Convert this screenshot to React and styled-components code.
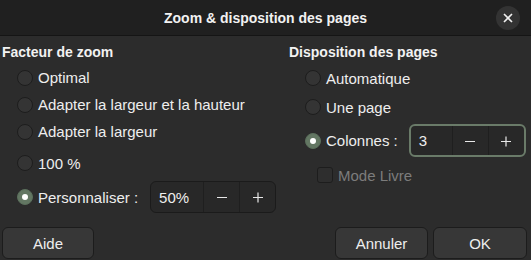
import React from "react"
import styled, { createGlobalStyle } from "styled-components"

const Global = createGlobalStyle`
    html, body {
        margin: 0;
        padding: 0;
        background: #2c2c2c;
    }
    body {
        font-family: "Liberation Sans", Arial, sans-serif;
        color: #eeeeee;
    }
`

const Dialog = styled.div`
    width: 531px;
    height: 260px;
    display: flex;
    flex-direction: column;
    background: #2c2c2c;
    overflow: hidden;
`

const TitleBar = styled.div`
    height: 35px;
    display: grid;
    grid-template-columns: 1fr auto 1fr;
    align-items: center;
    background: #202020;
    border-bottom: 1px solid #151515;
    flex-shrink: 0;
`

const Title = styled.div`
    grid-column: 2;
    font-weight: bold;
    font-size: 14px;
    color: #f2f2f2;
`

const CloseBtn = styled.div`
    grid-column: 3;
    justify-self: end;
    margin-right: 11px;
    width: 24px;
    height: 24px;
    border-radius: 50%;
    background: #333333;
    display: flex;
    align-items: center;
    justify-content: center;
`

const Columns = styled.div`
    display: grid;
    grid-template-columns: 287px 1fr;
    padding: 4px 0 0 2px;
`

const Column = styled.div`
    display: flex;
    flex-direction: column;
`

const Heading = styled.div`
    height: 24px;
    display: flex;
    align-items: center;
    font-weight: bold;
    font-size: 14px;
    color: #f2f2f2;
`

const Row = styled.div`
    height: ${(p) => p.h}px;
    margin-top: ${(p) => p.mt || 0}px;
    display: flex;
    align-items: center;
    padding-left: ${(p) => p.indent}px;
    font-size: 15px;
`

const Radio = styled.span`
    width: 16px;
    height: 16px;
    box-sizing: border-box;
    border-radius: 50%;
    border: 1px solid ${(p) => (p.checked ? "#5b6f5c" : "#1d1d1d")};
    background: ${(p) => (p.checked ? "#637763" : "#343434")};
    display: flex;
    align-items: center;
    justify-content: center;
    margin-right: 5px;
    flex-shrink: 0;

    &::after {
        content: "";
        display: ${(p) => (p.checked ? "block" : "none")};
        width: 6px;
        height: 6px;
        border-radius: 50%;
        background: #ffffff;
    }
`

const Check = styled.span`
    width: 16px;
    height: 16px;
    box-sizing: border-box;
    border-radius: 3px;
    border: 1px solid #1d1d1d;
    background: #2e2e2e;
    margin-right: 5px;
`

const Label = styled.span`
    color: ${(p) => (p.dim ? "#7c7c7c" : "#eeeeee")};
    white-space: nowrap;
`

const Spin = styled.div`
    margin-left: ${(p) => p.ml}px;
    width: ${(p) => p.w}px;
    height: ${(p) => p.h}px;
    box-sizing: border-box;
    display: flex;
    border-radius: 6px;
    border: ${(p) => (p.focus ? "2px solid #6a7b69" : "1px solid #1b1b1b")};
    background: #282828;
    overflow: hidden;
`

const SpinValue = styled.div`
    flex: 1;
    display: flex;
    align-items: center;
    padding-left: 8px;
    font-size: 15px;
`

const SpinBtn = styled.div`
    width: 35px;
    border-left: 1px solid #1f1f1f;
    display: flex;
    align-items: center;
    justify-content: center;
`

const Footer = styled.div`
    margin-top: auto;
    display: flex;
    gap: 5px;
    padding: 0 4px 1px 2px;
`

const Spacer = styled.div`
    flex: 1;
`

const Button = styled.div`
    width: ${(p) => p.w}px;
    height: 32px;
    box-sizing: border-box;
    border-radius: 6px;
    border: 1px solid #1c1c1c;
    background: #373737;
    display: flex;
    align-items: center;
    justify-content: center;
    font-size: 15px;
    color: #eeeeee;
`

const Minus = () => (
    <svg width="12" height="12" viewBox="0 0 12 12"><path d="M1 6.5h10" stroke="#e8e8e8" strokeWidth="1.2" /></svg>
)
const Plus = () => (
    <svg width="12" height="12" viewBox="0 0 12 12"><path d="M1 6.5h10M6 1.5v10" stroke="#e8e8e8" strokeWidth="1.2" /></svg>
)

const SpinBox = ({ value, w, h, ml, focus }) => (
    <Spin w={w} h={h} ml={ml} focus={focus}>
        <SpinValue>{value}</SpinValue>
        <SpinBtn><Minus /></SpinBtn>
        <SpinBtn><Plus /></SpinBtn>
    </Spin>
)

const App = () => {
    return (
        <Dialog>
            <Global />
            <TitleBar>
                <Title>Zoom &amp; disposition des pages</Title>
                <CloseBtn>
                    <svg width="10" height="10" viewBox="0 0 10 10"><path d="M1 1l8 8M9 1l-8 8" stroke="#f0f0f0" strokeWidth="1.6" /></svg>
                </CloseBtn>
            </TitleBar>
            <Columns>
                <Column>
                    <Heading>Facteur de zoom</Heading>
                    <Row h={27} indent={15}><Radio /><Label>Optimal</Label></Row>
                    <Row h={27} indent={15}><Radio /><Label>Adapter la largeur et la hauteur</Label></Row>
                    <Row h={27} indent={15}><Radio /><Label>Adapter la largeur</Label></Row>
                    <Row h={36} indent={15}><Radio /><Label>100 %</Label></Row>
                    <Row h={32} indent={15}>
                        <Radio checked /><Label>Personnaliser :</Label>
                        <SpinBox value="50%" w={126} h={32} ml={12} />
                    </Row>
                </Column>
                <Column>
                    <Heading>Disposition des pages</Heading>
                    <Row h={28} indent={16}><Radio /><Label>Automatique</Label></Row>
                    <Row h={30} indent={16}><Radio /><Label>Une page</Label></Row>
                    <Row h={33} mt={2} indent={16}>
                        <Radio checked /><Label>Colonnes :</Label>
                        <SpinBox value="3" w={117} h={33} ml={11} focus />
                    </Row>
                    <Row h={24} mt={6} indent={28}><Check /><Label dim>Mode Livre</Label></Row>
                </Column>
            </Columns>
            <Footer>
                <Button w={92}>Aide</Button>
                <Spacer />
                <Button w={93}>Annuler</Button>
                <Button w={94}>OK</Button>
            </Footer>
        </Dialog>
    )
}

export default App
